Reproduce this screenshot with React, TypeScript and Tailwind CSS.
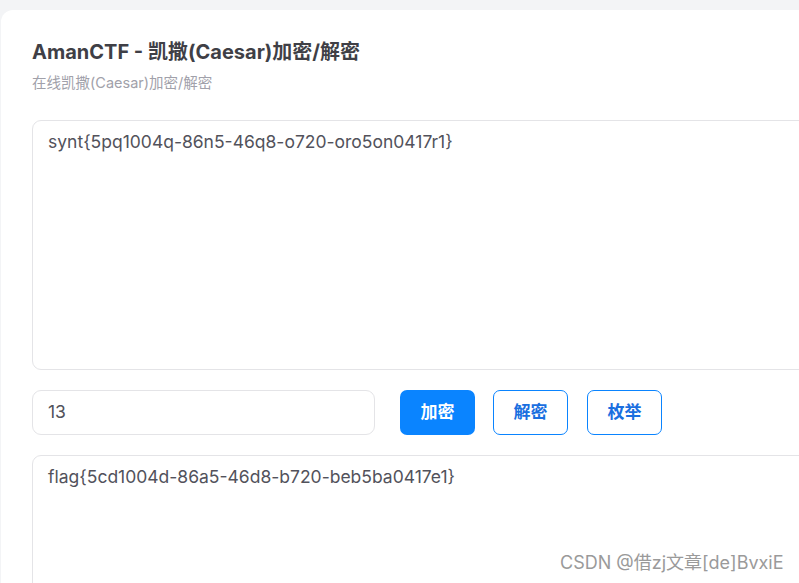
export default function App() {
  const font = { fontFamily: 'Inter, "Noto Sans CJK SC", sans-serif' };
  return (
    <div
      className="w-[799px] h-[583px] overflow-hidden bg-[#f3f4f6] pt-[10px] pl-[1px] relative"
      style={font}
    >
      <main className="w-[900px] h-[700px] bg-white rounded-tl-[12px] px-[31px] pt-[28px]">
        <h1 className="text-[20px] leading-[28px] font-bold text-[#3f3f46]">
          AmanCTF - 凯撒(Caesar)加密/解密
        </h1>
        <p className="mt-[7px] text-[14.5px] leading-[20px] text-[#a1a1aa]">在线凯撒(Caesar)加密/解密</p>

        <div className="mt-[27px] h-[250px] border border-[#e4e4e7] rounded-[9px] px-[15px] py-[8px] text-[17.5px] leading-[26px] text-[#52525b]">
          synt{"{"}5pq1004q-86n5-46q8-o720-oro5on0417r1{"}"}
        </div>

        <div className="mt-[20px] flex items-center">
          <div className="w-[343px] h-[45px] border border-[#e4e4e7] rounded-[9px] px-[15px] flex items-center text-[17.5px] text-[#52525b]">
            13
          </div>
          <button className="ml-[25px] w-[75px] h-[45px] rounded-[7px] bg-[#0a84ff] text-white text-[17px] font-bold">
            加密
          </button>
          <button className="ml-[18px] w-[75px] h-[45px] rounded-[7px] border border-[#0a84ff] text-[#1a6fe0] text-[17px] font-bold">
            解密
          </button>
          <button className="ml-[19px] w-[75px] h-[45px] rounded-[7px] border border-[#0a84ff] text-[#1a6fe0] text-[17px] font-bold">
            枚举
          </button>
        </div>

        <div className="mt-[20px] h-[250px] border border-[#e4e4e7] rounded-[9px] px-[15px] py-[8px] text-[17.5px] leading-[26px] text-[#52525b]">
          flag{"{"}5cd1004d-86a5-46d8-b720-beb5ba0417e1{"}"}
        </div>
      </main>
      <span className="absolute left-[560px] top-[550px] text-[18px] leading-[26px] text-[#9a9a9a]">
        CSDN @借zj文章[de]BvxiE
      </span>
    </div>
  );
}
